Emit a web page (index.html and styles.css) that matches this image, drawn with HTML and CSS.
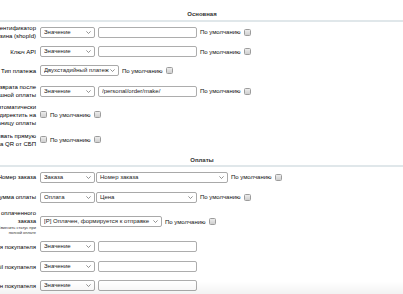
FILE: index.html
```html
<!DOCTYPE html>
<html lang="ru">
<head>
<meta charset="utf-8">
<title>Настройки платёжной системы</title>
<link rel="stylesheet" href="styles.css">
</head>
<body>
<div class="form">
  <div class="heading h-top">Основная</div>

  <div class="row h20">
    <div class="label">Идентификатор<br>магазина (shopId)</div>
    <div class="field">
      <select class="sel w55"><option>Значение</option></select>
      <input class="inp w99" type="text" value="">
      <span class="def">По умолчанию</span><input class="cb" type="checkbox">
    </div>
  </div>

  <div class="row h19">
    <div class="label">Ключ API</div>
    <div class="field">
      <select class="sel w55"><option>Значение</option></select>
      <input class="inp w99" type="text" value="">
      <span class="def">По умолчанию</span><input class="cb" type="checkbox">
    </div>
  </div>

  <div class="row h19">
    <div class="label">Тип платежа</div>
    <div class="field">
      <select class="sel w79"><option>Двухстадийный платеж</option></select>
      <span class="def">По умолчанию</span><input class="cb" type="checkbox">
    </div>
  </div>

  <div class="row h22">
    <div class="label">Страница возврата после<br>успешной оплаты</div>
    <div class="field">
      <select class="sel w55"><option>Значение</option></select>
      <input class="inp w99" type="text" value="/personal/order/make/">
      <span class="def">По умолчанию</span><input class="cb" type="checkbox">
    </div>
  </div>

  <div class="row h25">
    <div class="label">Автоматически<br>редиректить на<br>страницу оплаты</div>
    <div class="field">
      <input class="cb" type="checkbox">
      <span class="def">По умолчанию</span><input class="cb" type="checkbox">
    </div>
  </div>

  <div class="row h25">
    <div class="label">Показывать прямую<br>ссылку на QR от СБП</div>
    <div class="field">
      <input class="cb" type="checkbox">
      <span class="def">По умолчанию</span><input class="cb" type="checkbox">
    </div>
  </div>

  <div class="heading h-mid">Оплаты</div>

  <div class="row h20">
    <div class="label">Номер заказа</div>
    <div class="field">
      <select class="sel w55"><option>Заказа</option></select>
      <select class="sel w132"><option>Номер заказа</option></select>
      <span class="def">По умолчанию</span><input class="cb" type="checkbox">
    </div>
  </div>

  <div class="row h20">
    <div class="label">Сумма оплаты</div>
    <div class="field">
      <select class="sel w55"><option>Оплата</option></select>
      <select class="sel w100"><option>Цена</option></select>
      <span class="def">По умолчанию</span><input class="cb" type="checkbox">
    </div>
  </div>

  <div class="row h29">
    <div class="label">Статус оплаченного<br>заказа<small class="note">Изменить статус при<br>полной оплате</small></div>
    <div class="field">
      <select class="sel w122"><option>[P] Оплачен, формируется к отправке</option></select>
      <span class="def">По умолчанию</span><input class="cb" type="checkbox">
    </div>
  </div>

  <div class="row h21">
    <div class="label">Имя покупателя</div>
    <div class="field">
      <select class="sel w55"><option>Значение</option></select>
      <input class="inp w99" type="text" value="">
    </div>
  </div>

  <div class="row h19">
    <div class="label">E-mail покупателя</div>
    <div class="field">
      <select class="sel w55"><option>Значение</option></select>
      <input class="inp w99" type="text" value="">
    </div>
  </div>

  <div class="row h19">
    <div class="label">Телефон покупателя</div>
    <div class="field">
      <select class="sel w55"><option>Значение</option></select>
      <input class="inp w99" type="text" value="">
    </div>
  </div>
</div>
<div class="shade"></div>
</body>
</html>
```

FILE: styles.css
```css
html, body {
  margin: 0;
  padding: 0;
  background: #fff;
}

body {
  overflow: hidden;
  font-family: "Liberation Sans", Arial, sans-serif;
  font-size: 6px;
  color: #000;
}

.form {
  display: flex;
  flex-direction: column;
  margin-left: -50px;
  width: 504px;
}

.heading {
  display: flex;
  align-items: flex-end;
  justify-content: center;
  box-sizing: border-box;
  font-weight: bold;
  line-height: 8px;
  color: #333;
  padding-bottom: 1px;
  border-bottom: 2px solid #e0e7ea;
}

.h-top { height: 22px; padding-bottom: 2px; }
.h-mid { height: 15px; }

.row {
  display: grid;
  grid-template-columns: 90px 1fr;
  align-items: center;
}

.h19 { height: 19px; }
.h20 { height: 20px; }
.h21 { height: 21px; }
.h22 { height: 22px; }
.h25 { height: 25px; }
.h29 { height: 29px; }

.label {
  text-align: right;
  padding: 0 4px;
  line-height: 8px;
  white-space: nowrap;
}

.note {
  display: block;
  font-size: 4px;
  line-height: 5px;
  color: #333;
}

.field {
  display: flex;
  align-items: center;
  gap: 3px;
}

.sel {
  -webkit-appearance: none;
  appearance: none;
  box-sizing: border-box;
  height: 11px;
  margin: 0 -2px 0 0;
  padding: 0 8px 0 3px;
  border: 1px solid #a9a9a9;
  border-radius: 2px;
  font-family: "Liberation Sans", Arial, sans-serif;
  font-size: 6px;
  line-height: 9px;
  color: #222;
  background-color: #fff;
  background-image: url("data:image/svg+xml;utf8,<svg xmlns='http://www.w3.org/2000/svg' width='5' height='3' viewBox='0 0 5 3'><path d='M0.4 0.4L2.5 2.5L4.6 0.4' fill='none' stroke='%23777' stroke-width='0.8'/></svg>");
  background-repeat: no-repeat;
  background-position: right 3px center;
  background-size: 5px 3px;
}

.sel + .sel,
.sel + .inp {
  margin-left: 0;
}

.field .sel:last-of-type { margin-right: 0; }

.inp {
  box-sizing: border-box;
  height: 11px;
  margin: 0 0 0 -2px;
  padding: 0 3px;
  border: 1px solid #adadad;
  border-radius: 2px;
  font-family: "Liberation Sans", Arial, sans-serif;
  font-size: 6px;
  color: #222;
  background: #fff;
  outline: none;
}

.w55 { width: 55px; }
.w79 { width: 79px; }
.w99 { width: 99px; }
.w100 { width: 101px; }
.w122 { width: 122px; }
.w132 { width: 132px; }

.def {
  white-space: nowrap;
  color: #111;
}

.cb {
  -webkit-appearance: none;
  appearance: none;
  box-sizing: border-box;
  width: 7px;
  height: 7px;
  margin: 0;
  border: 1px solid #9c9c9c;
  border-radius: 1.5px;
  background: linear-gradient(#ececec, #cfcfcf);
}

.shade {
  position: fixed;
  left: 0;
  right: 0;
  bottom: 0;
  height: 12px;
  background: linear-gradient(rgba(0, 0, 0, 0), rgba(0, 0, 0, 0.05));
  pointer-events: none;
}
```
